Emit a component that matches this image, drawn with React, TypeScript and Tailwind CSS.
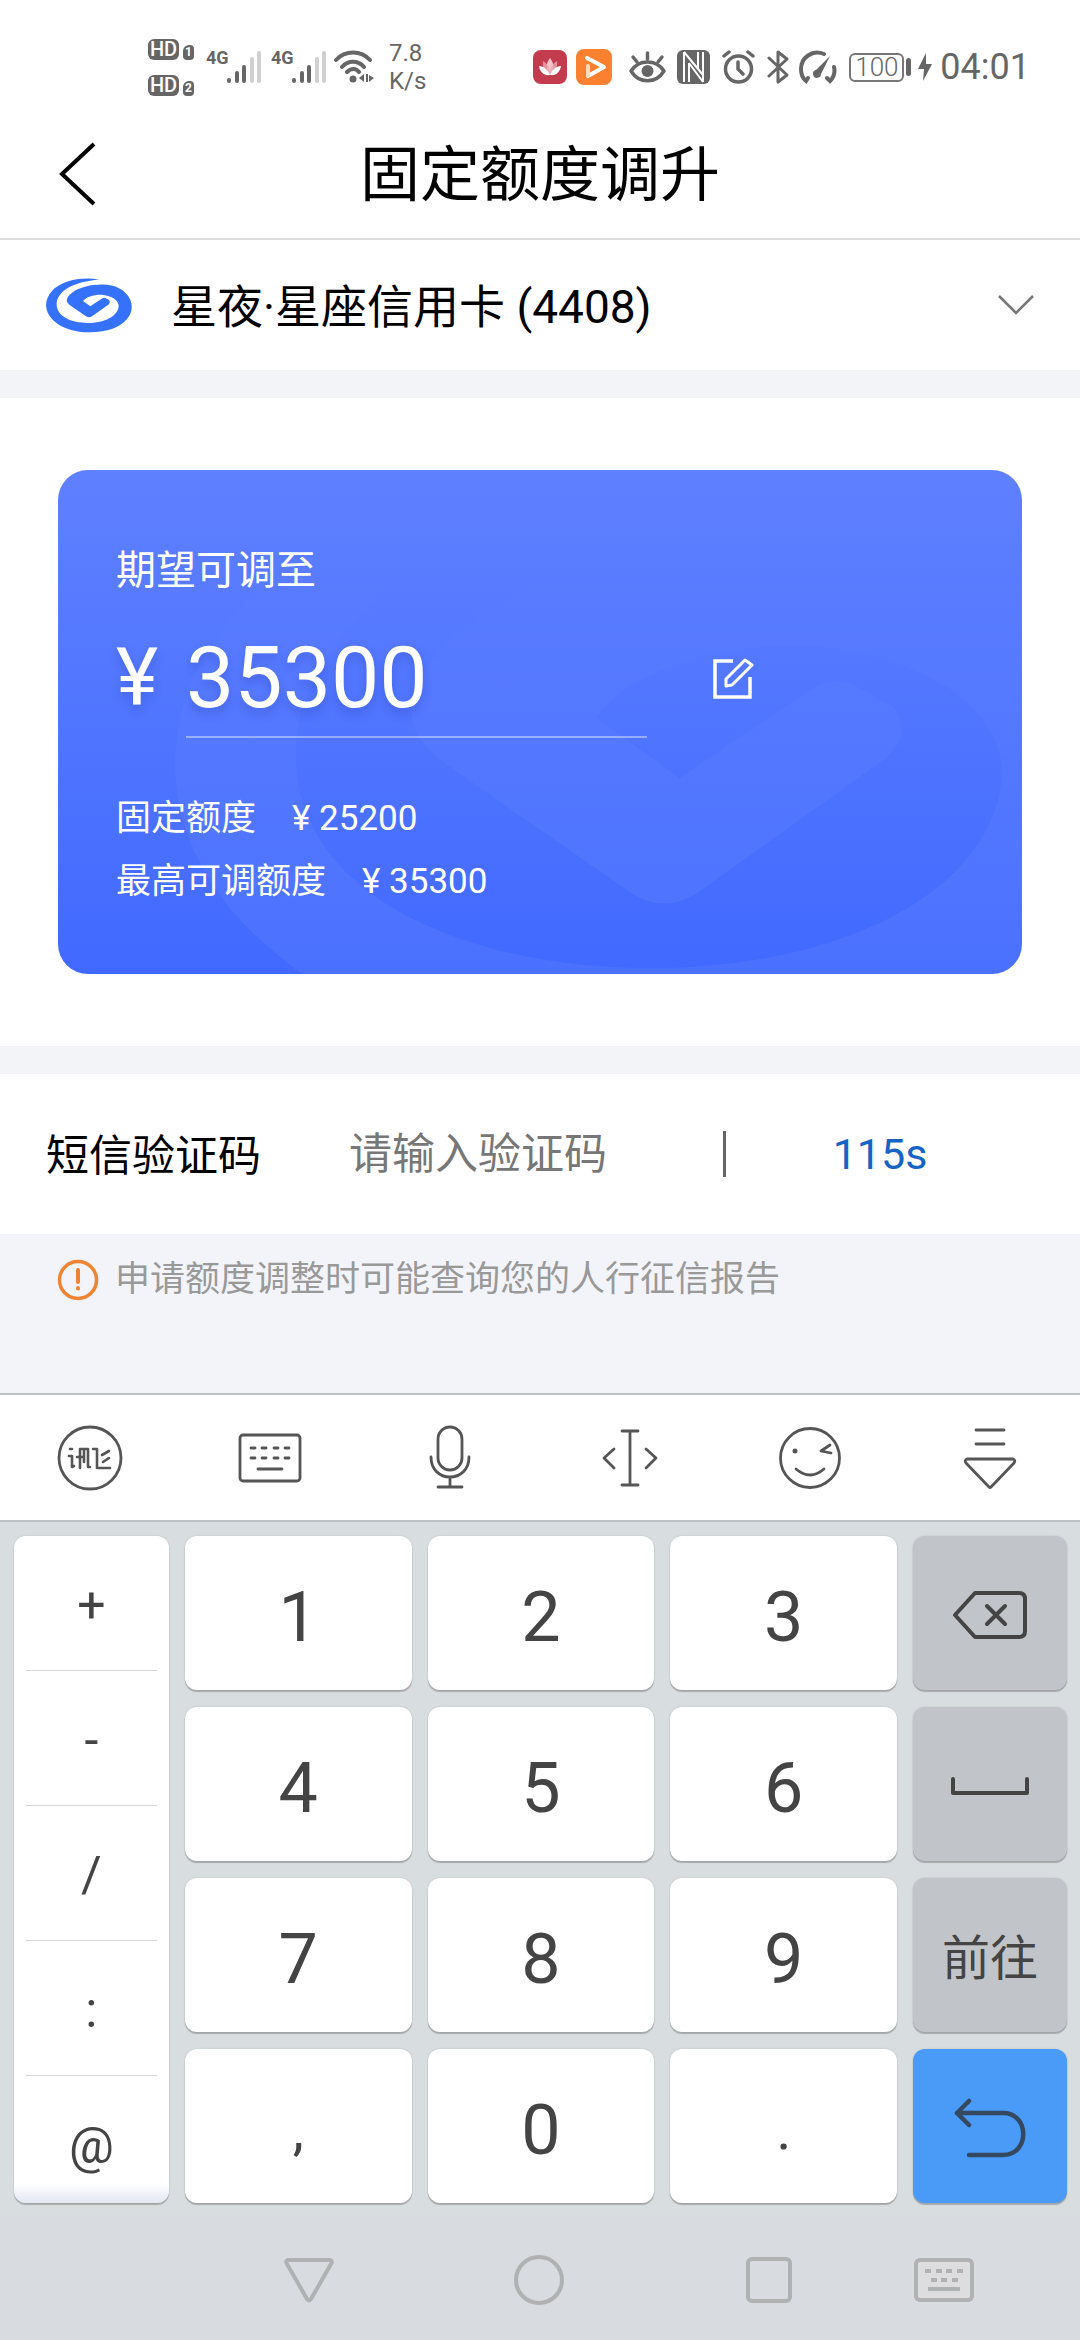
import type { ReactNode } from "react";

const symbols = ["+", "-", "/", ":", "@"];

const digitRows = [
  ["1", "2", "3"],
  ["4", "5", "6"],
  ["7", "8", "9"],
  [",", "0", "."],
];

const limits = [
  { label: "固定额度", value: "25200" },
  { label: "最高可调额度", value: "35300" },
];

const SWIRL =
  "M190 38C135 28 75 42 48 72C24 98 24 132 50 158C78 186 120 196 160 196C215 196 262 180 281 145C300 108 275 68 230 56C190 47 140 56 112 74C96 85 88 98 95 108Q98 112 104 116L150 148Q159 154 168 148L217 113Q225 106 219 99L208 93Q203 91 197 95L163 118L141 102C150 90 170 83 196 83C225 85 248 98 248 117C246 148 205 168 156 168C105 168 62 148 62 112C62 72 115 42 190 38Z";

function HdBadge({ sim }: { sim: string }) {
  return (
    <div className="flex items-end gap-1">
      <span className="flex h-[21px] w-[31px] items-center justify-center rounded-md bg-[#666] text-[20px] leading-none font-medium text-white">
        HD
      </span>
      <span className="flex h-[15px] w-[11px] items-center justify-center rounded-sm rounded-tl-md bg-[#666] text-[12px] leading-none font-bold text-white">
        {sim}
      </span>
    </div>
  );
}

function Signal() {
  return (
    <div className="flex w-[59px] items-start">
      <span className="w-[20px] text-[18px] leading-4 font-bold">4G</span>
      <svg className="h-[34px] w-[36px]" viewBox="0 0 36 34" fill="none" strokeWidth="4" strokeLinecap="round">
        <path d="M3 30V31M11 23V31M18 17V31" stroke="#666" />
        <path d="M26 9V31M33 3V31" stroke="#d0d0d0" />
      </svg>
    </div>
  );
}

function StatusBar() {
  return (
    <div className="flex h-[110px] items-center justify-between pt-[24px] pr-[50px] pl-[148px] text-[#666]">
      <div className="flex items-center">
        <div className="mr-[12px] flex flex-col gap-[15px]">
          <HdBadge sim="1" />
          <HdBadge sim="2" />
        </div>
        <div className="mr-[4px] flex gap-[6px]">
          <Signal />
          <Signal />
        </div>
        <svg className="mr-[15px] h-[34px] w-[40px]" viewBox="0 0 40 34" fill="none" stroke="#666" strokeWidth="4" strokeLinecap="round">
          <path d="M2 10C11 0 27 0 36 10M8 17C14 10 24 10 30 17M13 22C17 18 22 18 25 22" />
          <circle cx="19" cy="29" r="3.5" fill="#666" stroke="none" />
          <path d="M25 28L30 24V32ZM32 24H34V32H32ZM35 25L40 28L35 32Z" fill="#666" stroke="none" />
        </svg>
        <div className="text-[24px] leading-7">
          <div>7.8</div>
          <div>K/s</div>
        </div>
      </div>

      <div className="flex items-center">
        <svg className="mr-[9px] h-[34px] w-[34px]" viewBox="0 0 34 34">
          <rect width="34" height="34" rx="8" fill="#c23c4e" />
          <path d="M17 8C21 13 22 19 17 25C12 19 13 13 17 8Z" fill="#f3c3c9" />
          <path d="M10 11C15 14 18 20 17 25C12 23 9 17 10 11ZM24 11C19 14 16 20 17 25C22 23 25 17 24 11Z" fill="#eda7b0" opacity=".8" />
          <path d="M6 16C11 16 15 20 17 25C11 26 7 22 6 16ZM28 16C23 16 19 20 17 25C23 26 27 22 28 16Z" fill="#fff" />
        </svg>
        <svg className="mr-[17px] h-[36px] w-[36px]" viewBox="0 0 36 36" fill="none">
          <rect width="36" height="36" rx="8" fill="#fb8030" />
          <path d="M11 9L28 18L12 27" stroke="#fff" strokeWidth="4" strokeLinecap="round" strokeLinejoin="round" />
          <path d="M12 17V26" stroke="#ffd9bd" strokeWidth="4" strokeLinecap="round" />
        </svg>
        <svg className="mr-[11px] h-[34px] w-[37px]" viewBox="0 0 37 34" fill="none" stroke="#666" strokeWidth="3.5" strokeLinecap="round">
          <path d="M2 21C10 9 27 9 35 21C27 34 10 34 2 21Z" strokeLinejoin="round" />
          <circle cx="18.500" cy="21" r="6" fill="#666" stroke="none" />
          <path d="M18.500 9V3M8 12L4 7M29 12L33 7" />
        </svg>
        <svg className="mr-[12px] h-[34px] w-[33px]" viewBox="0 0 33 34">
          <rect width="33" height="34" rx="6" fill="#666" />
          <path d="M7 2V32M26 2V32" stroke="#fff" strokeWidth="2" />
          <path d="M7 2L26 25M12 13L26 32M12 13V32M21 2V18" stroke="#fff" strokeWidth="2" fill="none" />
        </svg>
        <svg className="mr-[12px] h-[34px] w-[33px]" viewBox="0 0 33 34" fill="none" stroke="#666" strokeWidth="3.5" strokeLinecap="round">
          <circle cx="16.500" cy="19" r="13" />
          <path d="M16 12V19L21 24M2 6L7 2M31 6L26 2" />
        </svg>
        <svg className="mr-[10px] h-[36px] w-[22px]" viewBox="0 0 22 36" fill="none" stroke="#666" strokeWidth="3" strokeLinejoin="round" strokeLinecap="round">
          <path d="M2 9L20 26L11 33V3L20 10L2 27" />
        </svg>
        <svg className="mr-[12px] h-[34px] w-[38px]" viewBox="0 0 38 34" fill="none" stroke="#666" strokeWidth="4" strokeLinecap="round">
          <path d="M25 4C13 -1 2 8 2 19Q2 27 7 31L9 28M35 17Q37 25 31 31L28 28" />
          <path d="M31 6L17 20A4 4 0 1 0 22 24Z" fill="#666" stroke="none" />
        </svg>
        <div className="flex h-[29px] w-[55px] items-center justify-center rounded-md border-2 border-[#777] text-[26px] leading-none font-light">
          100
        </div>
        <span className="mr-[7px] ml-[2px] h-[18px] w-[5px] rounded-sm bg-[#666]" />
        <svg className="mr-[8px] h-[28px] w-[14px]" viewBox="0 0 14 28" fill="#666">
          <path d="M8 0L0 16H6L5 28L14 11H8Z" />
        </svg>
        <span className="text-[36px] leading-none">04:01</span>
      </div>
    </div>
  );
}

function LimitCard() {
  return (
    <div className="relative h-[504px] overflow-hidden rounded-[30px] bg-linear-to-b from-[#5f80ff] to-[#4169ff] pt-[71px] pl-[58px] text-white">
      {/* brand watermark behind the figures */}
      <svg className="absolute -top-[140px] left-[2px] h-[866px] w-[1254px]" viewBox="0 0 330 228">
        <defs>
          <linearGradient id="fade" x1="0" y1="60" x2="0" y2="150" gradientUnits="userSpaceOnUse">
            <stop offset="0" stopColor="#fff" stopOpacity="0" />
            <stop offset="1" stopColor="#fff" stopOpacity=".05" />
          </linearGradient>
        </defs>
        <path d={SWIRL} fill="url(#fade)" />
      </svg>
      <div className="relative">
        <label htmlFor="amount" className="block text-[40px] leading-[60px]">
          期望可调至
        </label>
        <div className="mt-[9px] flex items-center">
          <span className="w-[70px] pt-2 text-[80px] leading-none [text-shadow:0_6px_10px_rgba(30,50,160,0.25)]">¥</span>
          <input
            id="amount"
            defaultValue="35300"
            className="h-[128px] w-[461px] border-b-2 border-white/40 bg-transparent pt-2 text-[86px] leading-none outline-none [text-shadow:0_6px_10px_rgba(30,50,160,0.25)]"
          />
          <button aria-label="修改额度" className="ml-[65px] pt-2">
            <svg className="h-[42px] w-[42px]" viewBox="0 0 42 42" fill="none" stroke="#fff" strokeWidth="3.500">
              <path d="M21 4H3V40H38V20" />
              <path d="M14 29V22L33 3L40 8L20 28Z" strokeWidth="3" strokeLinejoin="round" />
            </svg>
          </button>
        </div>
        <dl className="mt-[49px] text-[35px] leading-[63px]">
          {limits.map((l) => (
            <div key={l.label} className="flex gap-[36px]">
              <dt>{l.label}</dt>
              <dd>¥ {l.value}</dd>
            </div>
          ))}
        </dl>
      </div>
    </div>
  );
}

function ToolIcon({ label, children }: { label: string; children: ReactNode }) {
  return (
    <button aria-label={label} className="flex items-center justify-center">
      <svg className="h-[68px] w-[68px]" viewBox="0 0 68 68" fill="none" stroke="#555" strokeWidth="2.800" strokeLinecap="round" strokeLinejoin="round">
        {children}
      </svg>
    </button>
  );
}

function Toolbar() {
  return (
    <div className="grid h-[129px] grid-cols-6 border-y-2 border-t-[#bfc0c5] border-b-[#bcc1c5] bg-white">
      <ToolIcon label="输入法">
        <circle cx="34" cy="34" r="31" />
        <path d="M14 25H16M13 32H16V43L18 42M24 44V25H32V43H34M21 33H27M28 26V38M37 25H41V44H54M46 31L53 27M47 38L53 34" strokeWidth="2.600" />
      </ToolIcon>
      <ToolIcon label="键盘">
        <rect x="4" y="11" width="60" height="46" rx="3" />
        <path d="M15 24H19M26 24H30M38 24H42M49 24H53M15 34H19M26 34H30M38 34H42M49 34H53M22 45H46" />
      </ToolIcon>
      <ToolIcon label="语音">
        <rect x="22" y="3" width="24" height="43" rx="12" />
        <path d="M15 33C15 46 24 53 34 53C44 53 53 46 53 33M34 53V63M22 63H46" />
      </ToolIcon>
      <ToolIcon label="光标">
        <path d="M34 7V61M26 7H42M26 61H42M18 25L8 34L18 44M50 25L60 34L50 44" />
      </ToolIcon>
      <ToolIcon label="表情">
        <circle cx="34" cy="34" r="29.500" />
        <circle cx="19" cy="27" r="2.500" fill="#555" stroke="none" />
        <path d="M54 21L45 27L55 29M20 45Q34 57 48 45" />
      </ToolIcon>
      <ToolIcon label="收起">
        <path d="M20 6H48M20 20H48M11 35H57Q60 36 58 39L35 63Q34 64 33 63L10 39Q8 36 11 35Z" />
      </ToolIcon>
    </div>
  );
}

const keyShadow = "shadow-[0_2px_1px_rgba(0,0,0,0.22),0_0_2px_rgba(0,0,0,0.15)]";

function SideKey({ label, blue, children }: { label: string; blue?: boolean; children: ReactNode }) {
  return (
    <button
      aria-label={label}
      className={`flex flex-1 items-center justify-center rounded-xl pt-1 text-[48px] leading-none ${keyShadow} ${blue ? "bg-[#4a9af8]" : "bg-[#c1c4c9]"}`}
    >
      {children}
    </button>
  );
}

function Keypad() {
  return (
    <div className="grid h-[695px] grid-cols-[155fr_713fr_154fr] gap-4 bg-[#d8dde0] pt-[14px] pr-[13px] pb-[14px] pl-[14px] text-[#444]">
      <div className={`flex flex-col overflow-hidden rounded-xl bg-linear-to-t from-[#e2e7f2] to-white to-3% px-[12px] ${keyShadow}`}>
        {symbols.map((s) => (
          <button key={s} className="h-[135px] shrink-0 border-b border-[#d5d5d5] pt-1 text-[50px] leading-none last:border-b-0">
            {s}
          </button>
        ))}
      </div>
      <div className="grid grid-cols-3 grid-rows-4 gap-x-4 gap-y-[17px]">
        {digitRows.flat().map((d) => (
          <button key={d} className={`rounded-xl bg-white pt-2 leading-none ${keyShadow} ${/\d/.test(d) ? "text-[70px]" : "text-[56px]"}`}>
            {d}
          </button>
        ))}
      </div>
      <div className="flex flex-col gap-[17px]">
        <SideKey label="删除">
          <svg className="h-[50px] w-[76px]" viewBox="0 0 76 50" fill="none" stroke="#444" strokeWidth="4" strokeLinecap="round" strokeLinejoin="round">
            <path d="M23 3H67Q73 3 73 9V41Q73 47 67 47H23L3 25Z" />
            <path d="M35 16L53 34M53 16L35 34" />
          </svg>
        </SideKey>
        <SideKey label="空格">
          <svg className="h-[18px] w-[78px]" viewBox="0 0 78 18" fill="none" stroke="#444" strokeWidth="4" strokeLinecap="round" strokeLinejoin="round">
            <path d="M2 2V16H76V2" />
          </svg>
        </SideKey>
        <SideKey label="前往">
          <span className="pt-1">前往</span>
        </SideKey>
        <SideKey label="换行" blue>
          <svg className="h-[60px] w-[72px]" viewBox="0 0 72 60" fill="none" stroke="#34495f" strokeWidth="4.500" strokeLinecap="round" strokeLinejoin="round">
            <path d="M15 3L3 15L15 27M3 15H49C76 15 76 57 49 57H15" />
          </svg>
        </SideKey>
      </div>
    </div>
  );
}

function NavBar() {
  return (
    <nav className="grid flex-1 grid-cols-[194fr_230fr_230fr_230fr_120fr_76fr] bg-[#d8dbe0] pt-[2px]">
      <button aria-label="返回" className="col-start-2 flex items-center justify-center">
        <svg className="h-[46px] w-[52px]" viewBox="0 0 52 46" fill="none" stroke="#b0b1b3" strokeWidth="4" strokeLinejoin="round">
          <path d="M5 3H47Q50 4 48 7L28 42Q26 45 24 42L4 7Q2 4 5 3Z" />
        </svg>
      </button>
      <button aria-label="主页" className="flex items-center justify-center">
        <span className="size-[50px] rounded-full border-4 border-[#b0b1b3]" />
      </button>
      <button aria-label="最近任务" className="flex items-center justify-center">
        <span className="size-[46px] rounded-md border-4 border-[#b0b1b3]" />
      </button>
      <button aria-label="切换输入法" className="flex items-center justify-center">
        <svg className="h-[44px] w-[60px]" viewBox="0 0 60 44" fill="none" stroke="#b0b1b3" strokeWidth="4">
          <rect x="2" y="2" width="56" height="40" rx="4" fill="#dddddf" />
          <path d="M11 13H17M22 13H28M32 13H38M43 13H49M17 22H23M27 22H33M38 22H44M14 31H46" />
        </svg>
      </button>
    </nav>
  );
}

export default function App() {
  return (
    <div className="flex min-h-screen flex-col bg-white font-['Roboto','Noto_Sans_CJK_SC',sans-serif] text-black">
      <StatusBar />
      <header className="grid h-[130px] grid-cols-[1fr_auto_1fr] items-center border-b-2 border-[#ddd]">
        <button aria-label="返回" className="ml-[58px] w-[40px]">
          <svg className="h-[64px] w-[40px]" viewBox="0 0 40 64" fill="none" stroke="#000" strokeWidth="4">
            <path d="M36 2L4 32L36 62" />
          </svg>
        </button>
        <h1 className="pt-1 text-[60px] leading-none">固定额度调升</h1>
      </header>

      <button className="flex h-[130px] items-center pr-[45px] pl-[36px] text-left">
        <svg className="h-[76px] w-[110px]" viewBox="0 0 330 228">
          <path d={SWIRL} fill="#3671fb" />
        </svg>
        <span className="ml-[25px] flex-1 pt-1 text-[46px] leading-none">星夜·星座信用卡 (4408)</span>
        <svg className="h-[22px] w-[38px]" viewBox="0 0 38 22" fill="none" stroke="#777" strokeWidth="2.500">
          <path d="M2 2L19 19L36 2" />
        </svg>
      </button>

      <section className="border-y-[28px] border-[#f3f4f7] px-[58px] py-[72px]">
        <LimitCard />
      </section>

      <div className="flex h-[160px] items-center pl-[46px] text-[43px] leading-none">
        <label htmlFor="sms" className="w-[303px] pt-1">
          短信验证码
        </label>
        <input id="sms" placeholder="请输入验证码" className="h-[70px] w-[374px] outline-none placeholder:text-[#777]" />
        <span className="h-[46px] w-[3px] bg-[#666]" />
        <button className="flex-1 pr-[46px] text-[#1763c6]">115s</button>
      </div>

      <p className="flex h-[159px] items-start bg-[#f3f4f9] pt-[22px] pl-[57px] text-[35px] leading-[48px] text-[#999]">
        <svg className="mt-[3px] mr-[16px] h-[42px] w-[42px]" viewBox="0 0 42 42" fill="none" stroke="#ee8434" strokeWidth="3.500" strokeLinecap="round">
          <circle cx="21" cy="21" r="18.500" />
          <path d="M21 11V23M21 29V29.500" strokeWidth="4" />
        </svg>
        申请额度调整时可能查询您的人行征信报告
      </p>

      <Toolbar />
      <Keypad />
      <NavBar />
    </div>
  );
}
